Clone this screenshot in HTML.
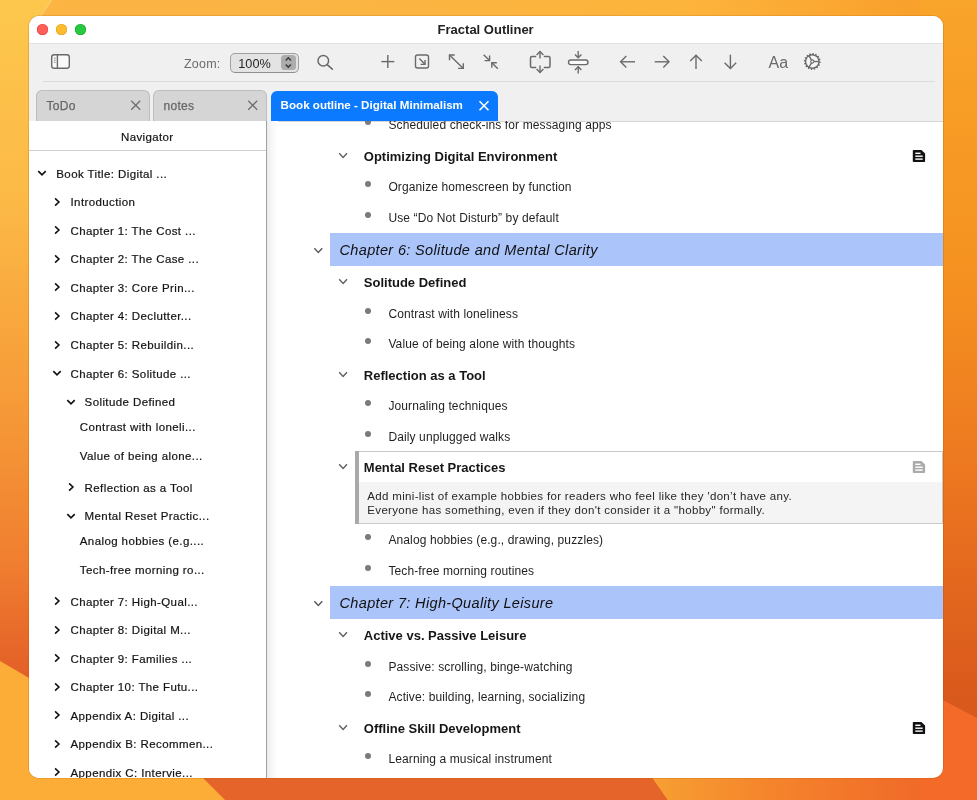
<!DOCTYPE html>
<html><head><meta charset="utf-8"><style>
*{box-sizing:border-box;margin:0;padding:0}
html,body{width:977px;height:800px;overflow:hidden}
body{position:relative;font-family:"Liberation Sans",sans-serif;background:#f9a02c}
#bg{position:absolute;left:0;top:0;width:977px;height:800px}
#win{position:absolute;left:29px;top:16px;width:914px;height:762px;border-radius:10px;overflow:hidden;background:#fff;will-change:transform;box-shadow:0 0 0 0.6px rgba(150,80,0,0.35)}
#inner{position:absolute;left:-29px;top:-16px;width:977px;height:800px}
.t{position:absolute;white-space:nowrap}
.r{position:absolute}
svg.i{position:absolute;overflow:visible}
</style></head><body>
<svg id="bg" width="977" height="800" viewBox="0 0 977 800">
<defs>
<linearGradient id="gtop" x1="0" y1="0" x2="1" y2="0"><stop offset="0" stop-color="#fcb443"/><stop offset="0.3" stop-color="#fbb544"/><stop offset="0.7" stop-color="#fdb43c"/><stop offset="1" stop-color="#f89b28"/></linearGradient>
<linearGradient id="gleft" x1="0" y1="0" x2="0" y2="1"><stop offset="0" stop-color="#fdc74d"/><stop offset="0.25" stop-color="#fcb946"/><stop offset="0.5" stop-color="#f69b38"/><stop offset="0.7" stop-color="#f07f30"/><stop offset="0.85" stop-color="#e35e27"/><stop offset="1" stop-color="#dd5424"/></linearGradient>
<linearGradient id="gright" x1="0" y1="0" x2="0" y2="1"><stop offset="0" stop-color="#f9a42a"/><stop offset="0.35" stop-color="#f59120"/><stop offset="0.6" stop-color="#ec7620"/><stop offset="0.875" stop-color="#d9581c"/></linearGradient>
<linearGradient id="gbr" x1="0" y1="0" x2="1" y2="0"><stop offset="0" stop-color="#f7a232"/><stop offset="0.45" stop-color="#f5852c"/><stop offset="1" stop-color="#f06a28"/></linearGradient>
</defs>
<rect width="977" height="800" fill="url(#gtop)"/>
<rect x="0" y="0" width="60" height="800" fill="url(#gleft)"/><path d="M60,0 H51.5 Q46,9 40,17 L60,17 Z" fill="#fcb443"/><path d="M51.5,0 Q46,9 40,17" fill="none" stroke="#fdd27a" stroke-width="1.2" opacity="0.8"/>
<rect x="920" y="0" width="57" height="800" fill="url(#gright)"/>
<polygon points="0,661 60,696 60,800 0,800" fill="#fcad37"/>
<polygon points="920,688 977,718 977,800 920,800" fill="#f46a28"/>
<polygon points="60,760 185,760 225,800 60,800" fill="#fcad37"/>
<polygon points="185,760 640,760 668,800 225,800" fill="#e5642a"/>
<polygon points="640,760 920,760 920,800 668,800" fill="url(#gbr)"/>
</svg>
<div id="win"><div id="inner"><div class="r" style="left:29px;top:16px;width:914px;height:27px;background:#fff"></div><div class="t" style="left:437.60px;top:22.50px;font-size:13px;line-height:13px;color:#222222;font-weight:bold;font-style:normal;letter-spacing:0px;">Fractal Outliner</div><div class="r" style="left:36.8px;top:24.299999999999997px;width:11.2px;height:11.2px;border-radius:50%;background:#ff5f57;box-shadow:inset 0 0 0 0.6px #e0443e"></div><div class="r" style="left:55.8px;top:24.299999999999997px;width:11.2px;height:11.2px;border-radius:50%;background:#febc2e;box-shadow:inset 0 0 0 0.6px #dea123"></div><div class="r" style="left:74.80000000000001px;top:24.299999999999997px;width:11.2px;height:11.2px;border-radius:50%;background:#28c840;box-shadow:inset 0 0 0 0.6px #1aab29"></div><div class="r" style="left:29px;top:43px;width:914px;height:78px;background:#f0f0f0"></div><div class="r" style="left:29px;top:43px;width:914px;height:1px;background:#e2e2e2"></div><div class="r" style="left:43px;top:81px;width:892px;height:1px;background:#dcdcdc"></div><div class="r" style="left:29px;top:120.5px;width:914px;height:1.2px;background:#d6d6d6"></div><svg class="i" style="left:45px;top:48px" width="30" height="26" viewBox="45 48 30 26"><rect x="51.7" y="54.7" width="17.6" height="13.6" rx="2.6" fill="#fafafa" stroke="#6a6a6a" stroke-width="1.4"/><line x1="57.4" y1="55" x2="57.4" y2="68" stroke="#6a6a6a" stroke-width="1.4"/><g stroke="#8a8a8a" stroke-width="0.9"><line x1="53.8" y1="58.1" x2="55.8" y2="58.1"/><line x1="53.8" y1="60.2" x2="55.8" y2="60.2"/><line x1="53.8" y1="62.3" x2="55.8" y2="62.3"/></g></svg><div class="t" style="left:184.00px;top:57.72px;font-size:12.5px;line-height:12.5px;color:#6b6b6b;font-weight:normal;font-style:normal;letter-spacing:0.2px;">Zoom:</div><div class="r" style="left:230px;top:53px;width:68.5px;height:19.5px;border-radius:5px;background:#e3e3e3;border:1px solid #a0a0a0;border-bottom-color:#8e8e8e"></div><div class="r" style="left:281px;top:55.2px;width:14.5px;height:14.5px;border-radius:3.5px;background:#acacac"></div><svg class="i" style="left:281px;top:55px" width="15" height="15" viewBox="281 55 15 15"><polyline points="285.7,60.4 288.3,57.7 290.9,60.4" fill="none" stroke="#3a3a3a" stroke-width="1.45"/><polyline points="285.7,64.4 288.3,67.1 290.9,64.4" fill="none" stroke="#3a3a3a" stroke-width="1.45"/></svg><div class="t" style="left:238.30px;top:57.55px;font-size:12.7px;line-height:12.7px;color:#262626;font-weight:normal;font-style:normal;letter-spacing:0px;">100%</div><svg class="i" style="left:310px;top:50px" width="28" height="24" viewBox="310 50 28 24"><circle cx="323.3" cy="60.8" r="5.3" fill="none" stroke="#6a6a6a" stroke-width="1.5"/><line x1="327.2" y1="64.7" x2="332.3" y2="69.2" stroke="#6a6a6a" stroke-width="1.6" stroke-linecap="round"/></svg><svg class="i" style="left:376px;top:50px" width="24" height="24" viewBox="376 50 24 24"><line x1="381.3" y1="61.6" x2="394.3" y2="61.6" stroke="#6a6a6a" stroke-width="1.4"/><line x1="387.8" y1="55.1" x2="387.8" y2="68.1" stroke="#6a6a6a" stroke-width="1.4"/></svg><svg class="i" style="left:410px;top:50px" width="24" height="24" viewBox="410 50 24 24"><rect x="415.5" y="55" width="13" height="13" rx="2" fill="none" stroke="#6a6a6a" stroke-width="1.4"/><line x1="419.3" y1="58.6" x2="425" y2="64.3" stroke="#6a6a6a" stroke-width="1.4"/><polyline points="420.6,64.4 425,64.4 425,60" fill="none" stroke="#6a6a6a" stroke-width="1.4"/></svg><svg class="i" style="left:444px;top:50px" width="24" height="24" viewBox="444 50 24 24"><line x1="449.5" y1="55" x2="463.3" y2="68.4" stroke="#6a6a6a" stroke-width="1.4"/><polyline points="449.5,60.2 449.5,55 454.7,55" fill="none" stroke="#6a6a6a" stroke-width="1.4"/><polyline points="458.1,68.4 463.3,68.4 463.3,63.2" fill="none" stroke="#6a6a6a" stroke-width="1.4"/></svg><svg class="i" style="left:479px;top:50px" width="24" height="24" viewBox="479 50 24 24"><line x1="483.6" y1="54.8" x2="489.6" y2="60.6" stroke="#6a6a6a" stroke-width="1.4"/><polyline points="484.6,60.6 489.6,60.6 489.6,55.6" fill="none" stroke="#6a6a6a" stroke-width="1.4"/><line x1="491.8" y1="62.8" x2="497.8" y2="68.8" stroke="#6a6a6a" stroke-width="1.4"/><polyline points="491.8,67.8 491.8,62.8 496.8,62.8" fill="none" stroke="#6a6a6a" stroke-width="1.4"/></svg><svg class="i" style="left:524px;top:46px" width="34" height="32" viewBox="524 46 34 32"><path d="M536.2,56.6 H532 Q530.5,56.6 530.5,58.1 V66 Q530.5,67.5 532,67.5 H536.2 M543.8,56.6 H548.5 Q550,56.6 550,58.1 V66 Q550,67.5 548.5,67.5 H543.8" fill="none" stroke="#6a6a6a" stroke-width="1.5"/><line x1="540" y1="51.5" x2="540" y2="58.5" stroke="#6a6a6a" stroke-width="1.4"/><polyline points="536.6,55 540,51.6 543.4,55" fill="none" stroke="#6a6a6a" stroke-width="1.4"/><line x1="540" y1="65.5" x2="540" y2="72.5" stroke="#6a6a6a" stroke-width="1.4"/><polyline points="536.6,69 540,72.4 543.4,69" fill="none" stroke="#6a6a6a" stroke-width="1.4"/></svg><svg class="i" style="left:562px;top:46px" width="34" height="32" viewBox="562 46 34 32"><rect x="568.5" y="60" width="19.5" height="4.6" rx="2.3" fill="#fafafa" stroke="#6a6a6a" stroke-width="1.4"/><line x1="578.2" y1="51" x2="578.2" y2="57.8" stroke="#6a6a6a" stroke-width="1.4"/><polyline points="575,54.6 578.2,57.8 581.4,54.6" fill="none" stroke="#6a6a6a" stroke-width="1.4"/><line x1="578.2" y1="66.8" x2="578.2" y2="73.6" stroke="#6a6a6a" stroke-width="1.4"/><polyline points="575,70 578.2,66.8 581.4,70" fill="none" stroke="#6a6a6a" stroke-width="1.4"/></svg><svg class="i" style="left:615px;top:50px" width="24" height="24" viewBox="615 50 24 24"><line x1="620.6" y1="61.8" x2="635" y2="61.8" stroke="#6a6a6a" stroke-width="1.4"/><polyline points="626.3,56 620.6,61.8 626.3,67.5" fill="none" stroke="#6a6a6a" stroke-width="1.4"/></svg><svg class="i" style="left:650px;top:50px" width="24" height="24" viewBox="650 50 24 24"><line x1="654.7" y1="61.8" x2="669" y2="61.8" stroke="#6a6a6a" stroke-width="1.4"/><polyline points="663.3,56 669,61.8 663.3,67.5" fill="none" stroke="#6a6a6a" stroke-width="1.4"/></svg><svg class="i" style="left:684px;top:50px" width="24" height="24" viewBox="684 50 24 24"><line x1="696" y1="55.3" x2="696" y2="69" stroke="#6a6a6a" stroke-width="1.4"/><polyline points="690.2,61 696,55.3 701.8,61" fill="none" stroke="#6a6a6a" stroke-width="1.4"/></svg><svg class="i" style="left:718px;top:50px" width="24" height="24" viewBox="718 50 24 24"><line x1="730.4" y1="54.7" x2="730.4" y2="68.5" stroke="#6a6a6a" stroke-width="1.4"/><polyline points="724.6,62.8 730.4,68.5 736.2,62.8" fill="none" stroke="#6a6a6a" stroke-width="1.4"/></svg><div class="t" style="left:768.50px;top:55.06px;font-size:16px;line-height:16px;color:#6a6a6a;font-weight:normal;font-style:normal;letter-spacing:0px;">Aa</div><svg class="i" style="left:800px;top:49px" width="25" height="25" viewBox="800 49 25 25"><polygon points="820.79,61.92 820.71,62.75 819.38,63.27 819.17,63.96 819.98,65.13 819.59,65.87 818.16,65.85 817.71,66.40 818.01,67.80 817.36,68.33 816.05,67.76 815.42,68.10 815.16,69.50 814.37,69.75 813.37,68.72 812.66,68.79 811.88,69.99 811.05,69.91 810.53,68.58 809.84,68.37 808.67,69.18 807.93,68.79 807.95,67.36 807.40,66.91 806.00,67.21 805.47,66.56 806.04,65.25 805.70,64.62 804.30,64.36 804.05,63.57 805.08,62.57 805.01,61.86 803.81,61.08 803.89,60.25 805.22,59.73 805.43,59.04 804.62,57.87 805.01,57.13 806.44,57.15 806.89,56.60 806.59,55.20 807.24,54.67 808.55,55.24 809.18,54.90 809.44,53.50 810.23,53.25 811.23,54.28 811.94,54.21 812.72,53.01 813.55,53.09 814.07,54.42 814.76,54.63 815.93,53.82 816.67,54.21 816.65,55.64 817.20,56.09 818.60,55.79 819.13,56.44 818.56,57.75 818.90,58.38 820.30,58.64 820.55,59.43 819.52,60.43 819.59,61.14" fill="#6a6a6a"/><circle cx="812.3" cy="61.5" r="6.0" fill="#f5f5f5"/><line x1="813.80" y1="61.50" x2="818.50" y2="61.50" stroke="#6a6a6a" stroke-width="1.35"/><line x1="811.55" y1="62.80" x2="809.20" y2="66.87" stroke="#6a6a6a" stroke-width="1.35"/><line x1="811.55" y1="60.20" x2="809.20" y2="56.13" stroke="#6a6a6a" stroke-width="1.35"/><circle cx="812.3" cy="61.5" r="1.6" fill="#f5f5f5" stroke="#6a6a6a" stroke-width="1.1"/></svg><div class="r" style="left:35.5px;top:89.5px;width:114.5px;height:32px;border-radius:6px 6px 0 0;background:#d5d5d5;border:1px solid #bdbdbd;border-bottom:none"></div><div class="t" style="left:46.50px;top:99.64px;font-size:12px;line-height:12px;color:#666666;font-weight:normal;font-style:normal;letter-spacing:0.3px;-webkit-text-stroke:0.25px #666;">ToDo</div><svg class="i" style="left:128px;top:97px" width="16" height="16" viewBox="128 97 16 16"><line x1="131.2" y1="100.8" x2="140.2" y2="109.8" stroke="#6e6e6e" stroke-width="1.3"/><line x1="131.2" y1="109.8" x2="140.2" y2="100.8" stroke="#6e6e6e" stroke-width="1.3"/></svg><div class="r" style="left:152.5px;top:89.5px;width:114.0px;height:32px;border-radius:6px 6px 0 0;background:#d5d5d5;border:1px solid #bdbdbd;border-bottom:none"></div><div class="t" style="left:163.50px;top:99.64px;font-size:12px;line-height:12px;color:#666666;font-weight:normal;font-style:normal;letter-spacing:0.3px;-webkit-text-stroke:0.25px #666;">notes</div><svg class="i" style="left:244.5px;top:97px" width="16" height="16" viewBox="244.5 97 16 16"><line x1="247.7" y1="100.8" x2="256.7" y2="109.8" stroke="#6e6e6e" stroke-width="1.3"/><line x1="247.7" y1="109.8" x2="256.7" y2="100.8" stroke="#6e6e6e" stroke-width="1.3"/></svg><div class="r" style="left:271px;top:90.8px;width:226.5px;height:30.2px;border-radius:6px 6px 0 0;background:#0b7afe"></div><div class="t" style="left:280.60px;top:99.48px;font-size:11.6px;line-height:11.6px;color:#ffffff;font-weight:bold;font-style:normal;letter-spacing:0px;">Book outline - Digital Minimalism</div><svg class="i" style="left:476px;top:97px" width="16" height="16" viewBox="476 97 16 16"><line x1="479.5" y1="101.2" x2="488.5" y2="110.2" stroke="#ffffff" stroke-width="1.6"/><line x1="479.5" y1="110.2" x2="488.5" y2="101.2" stroke="#ffffff" stroke-width="1.6"/></svg><div class="r" style="left:29px;top:121px;width:237px;height:657px;background:#fff"></div><div class="r" style="left:29px;top:150px;width:237px;height:1px;background:#cfcfcf"></div><div class="r" style="left:266px;top:121px;width:1px;height:657px;background:#a2a2a2"></div><div class="r" style="left:267px;top:121px;width:11px;height:657px;background:linear-gradient(to right,#ececec,#f6f6f6 40%,#ffffff)"></div><div class="t" style="left:121.00px;top:131.97px;font-size:11.5px;line-height:11.5px;color:#141414;font-weight:normal;font-style:normal;letter-spacing:0.35px;-webkit-text-stroke:0.2px #141414;">Navigator</div><div class="t" style="left:56.30px;top:168.67px;font-size:11.5px;line-height:11.5px;color:#141414;font-weight:normal;font-style:normal;letter-spacing:0.4px;-webkit-text-stroke:0.2px #141414;">Book Title: Digital ...</div><svg class="i" style="left:34.3px;top:165.10000000000002px" width="16" height="16" viewBox="34.3 165.10000000000002 16 16"><polyline points="38.60,171.20 42.30,175.00 46.00,171.20" fill="none" stroke="#111" stroke-width="1.6"/></svg><div class="t" style="left:70.50px;top:197.17px;font-size:11.5px;line-height:11.5px;color:#141414;font-weight:normal;font-style:normal;letter-spacing:0.4px;-webkit-text-stroke:0.2px #141414;">Introduction</div><svg class="i" style="left:48.8px;top:193.60000000000002px" width="16" height="16" viewBox="48.8 193.60000000000002 16 16"><polyline points="54.90,198.00 58.70,201.60 54.90,205.20" fill="none" stroke="#111" stroke-width="1.6"/></svg><div class="t" style="left:70.50px;top:225.77px;font-size:11.5px;line-height:11.5px;color:#141414;font-weight:normal;font-style:normal;letter-spacing:0.4px;-webkit-text-stroke:0.2px #141414;">Chapter 1: The Cost ...</div><svg class="i" style="left:48.8px;top:222.20000000000002px" width="16" height="16" viewBox="48.8 222.20000000000002 16 16"><polyline points="54.90,226.60 58.70,230.20 54.90,233.80" fill="none" stroke="#111" stroke-width="1.6"/></svg><div class="t" style="left:70.50px;top:254.37px;font-size:11.5px;line-height:11.5px;color:#141414;font-weight:normal;font-style:normal;letter-spacing:0.4px;-webkit-text-stroke:0.2px #141414;">Chapter 2: The Case ...</div><svg class="i" style="left:48.8px;top:250.8px" width="16" height="16" viewBox="48.8 250.8 16 16"><polyline points="54.90,255.20 58.70,258.80 54.90,262.40" fill="none" stroke="#111" stroke-width="1.6"/></svg><div class="t" style="left:70.50px;top:282.97px;font-size:11.5px;line-height:11.5px;color:#141414;font-weight:normal;font-style:normal;letter-spacing:0.4px;-webkit-text-stroke:0.2px #141414;">Chapter 3: Core Prin...</div><svg class="i" style="left:48.8px;top:279.40000000000003px" width="16" height="16" viewBox="48.8 279.40000000000003 16 16"><polyline points="54.90,283.80 58.70,287.40 54.90,291.00" fill="none" stroke="#111" stroke-width="1.6"/></svg><div class="t" style="left:70.50px;top:311.47px;font-size:11.5px;line-height:11.5px;color:#141414;font-weight:normal;font-style:normal;letter-spacing:0.4px;-webkit-text-stroke:0.2px #141414;">Chapter 4: Declutter...</div><svg class="i" style="left:48.8px;top:307.90000000000003px" width="16" height="16" viewBox="48.8 307.90000000000003 16 16"><polyline points="54.90,312.30 58.70,315.90 54.90,319.50" fill="none" stroke="#111" stroke-width="1.6"/></svg><div class="t" style="left:70.50px;top:340.07px;font-size:11.5px;line-height:11.5px;color:#141414;font-weight:normal;font-style:normal;letter-spacing:0.4px;-webkit-text-stroke:0.2px #141414;">Chapter 5: Rebuildin...</div><svg class="i" style="left:48.8px;top:336.5px" width="16" height="16" viewBox="48.8 336.5 16 16"><polyline points="54.90,340.90 58.70,344.50 54.90,348.10" fill="none" stroke="#111" stroke-width="1.6"/></svg><div class="t" style="left:70.50px;top:368.67px;font-size:11.5px;line-height:11.5px;color:#141414;font-weight:normal;font-style:normal;letter-spacing:0.4px;-webkit-text-stroke:0.2px #141414;">Chapter 6: Solitude ...</div><svg class="i" style="left:48.5px;top:365.1px" width="16" height="16" viewBox="48.5 365.1 16 16"><polyline points="52.80,371.20 56.50,375.00 60.20,371.20" fill="none" stroke="#111" stroke-width="1.6"/></svg><div class="t" style="left:84.60px;top:397.27px;font-size:11.5px;line-height:11.5px;color:#141414;font-weight:normal;font-style:normal;letter-spacing:0.4px;-webkit-text-stroke:0.2px #141414;">Solitude Defined</div><svg class="i" style="left:63.0px;top:393.7px" width="16" height="16" viewBox="63.0 393.7 16 16"><polyline points="67.30,399.80 71.00,403.60 74.70,399.80" fill="none" stroke="#111" stroke-width="1.6"/></svg><div class="t" style="left:79.80px;top:422.17px;font-size:11.5px;line-height:11.5px;color:#141414;font-weight:normal;font-style:normal;letter-spacing:0.4px;-webkit-text-stroke:0.2px #141414;">Contrast with loneli...</div><div class="t" style="left:79.80px;top:450.77px;font-size:11.5px;line-height:11.5px;color:#141414;font-weight:normal;font-style:normal;letter-spacing:0.4px;-webkit-text-stroke:0.2px #141414;">Value of being alone...</div><div class="t" style="left:84.60px;top:482.87px;font-size:11.5px;line-height:11.5px;color:#141414;font-weight:normal;font-style:normal;letter-spacing:0.4px;-webkit-text-stroke:0.2px #141414;">Reflection as a Tool</div><svg class="i" style="left:62.900000000000006px;top:479.3px" width="16" height="16" viewBox="62.900000000000006 479.3 16 16"><polyline points="69.00,483.70 72.80,487.30 69.00,490.90" fill="none" stroke="#111" stroke-width="1.6"/></svg><div class="t" style="left:84.60px;top:511.27px;font-size:11.5px;line-height:11.5px;color:#141414;font-weight:normal;font-style:normal;letter-spacing:0.4px;-webkit-text-stroke:0.2px #141414;">Mental Reset Practic...</div><svg class="i" style="left:62.900000000000006px;top:507.69999999999993px" width="16" height="16" viewBox="62.900000000000006 507.69999999999993 16 16"><polyline points="67.20,513.80 70.90,517.60 74.60,513.80" fill="none" stroke="#111" stroke-width="1.6"/></svg><div class="t" style="left:79.80px;top:536.07px;font-size:11.5px;line-height:11.5px;color:#141414;font-weight:normal;font-style:normal;letter-spacing:0.4px;-webkit-text-stroke:0.2px #141414;">Analog hobbies (e.g....</div><div class="t" style="left:79.80px;top:564.67px;font-size:11.5px;line-height:11.5px;color:#141414;font-weight:normal;font-style:normal;letter-spacing:0.4px;-webkit-text-stroke:0.2px #141414;">Tech-free morning ro...</div><div class="t" style="left:70.50px;top:596.77px;font-size:11.5px;line-height:11.5px;color:#141414;font-weight:normal;font-style:normal;letter-spacing:0.4px;-webkit-text-stroke:0.2px #141414;">Chapter 7: High-Qual...</div><svg class="i" style="left:48.8px;top:593.1999999999999px" width="16" height="16" viewBox="48.8 593.1999999999999 16 16"><polyline points="54.90,597.60 58.70,601.20 54.90,604.80" fill="none" stroke="#111" stroke-width="1.6"/></svg><div class="t" style="left:70.50px;top:625.27px;font-size:11.5px;line-height:11.5px;color:#141414;font-weight:normal;font-style:normal;letter-spacing:0.4px;-webkit-text-stroke:0.2px #141414;">Chapter 8: Digital M...</div><svg class="i" style="left:48.8px;top:621.6999999999999px" width="16" height="16" viewBox="48.8 621.6999999999999 16 16"><polyline points="54.90,626.10 58.70,629.70 54.90,633.30" fill="none" stroke="#111" stroke-width="1.6"/></svg><div class="t" style="left:70.50px;top:653.77px;font-size:11.5px;line-height:11.5px;color:#141414;font-weight:normal;font-style:normal;letter-spacing:0.4px;-webkit-text-stroke:0.2px #141414;">Chapter 9: Families ...</div><svg class="i" style="left:48.8px;top:650.1999999999999px" width="16" height="16" viewBox="48.8 650.1999999999999 16 16"><polyline points="54.90,654.60 58.70,658.20 54.90,661.80" fill="none" stroke="#111" stroke-width="1.6"/></svg><div class="t" style="left:70.50px;top:682.37px;font-size:11.5px;line-height:11.5px;color:#141414;font-weight:normal;font-style:normal;letter-spacing:0.4px;-webkit-text-stroke:0.2px #141414;">Chapter 10: The Futu...</div><svg class="i" style="left:48.8px;top:678.8px" width="16" height="16" viewBox="48.8 678.8 16 16"><polyline points="54.90,683.20 58.70,686.80 54.90,690.40" fill="none" stroke="#111" stroke-width="1.6"/></svg><div class="t" style="left:70.50px;top:710.87px;font-size:11.5px;line-height:11.5px;color:#141414;font-weight:normal;font-style:normal;letter-spacing:0.4px;-webkit-text-stroke:0.2px #141414;">Appendix A: Digital ...</div><svg class="i" style="left:48.8px;top:707.3px" width="16" height="16" viewBox="48.8 707.3 16 16"><polyline points="54.90,711.70 58.70,715.30 54.90,718.90" fill="none" stroke="#111" stroke-width="1.6"/></svg><div class="t" style="left:70.50px;top:739.47px;font-size:11.5px;line-height:11.5px;color:#141414;font-weight:normal;font-style:normal;letter-spacing:0.4px;-webkit-text-stroke:0.2px #141414;">Appendix B: Recommen...</div><svg class="i" style="left:48.8px;top:735.9px" width="16" height="16" viewBox="48.8 735.9 16 16"><polyline points="54.90,740.30 58.70,743.90 54.90,747.50" fill="none" stroke="#111" stroke-width="1.6"/></svg><div class="t" style="left:70.50px;top:767.97px;font-size:11.5px;line-height:11.5px;color:#141414;font-weight:normal;font-style:normal;letter-spacing:0.4px;-webkit-text-stroke:0.2px #141414;">Appendix C: Intervie...</div><svg class="i" style="left:48.8px;top:764.4px" width="16" height="16" viewBox="48.8 764.4 16 16"><polyline points="54.90,768.80 58.70,772.40 54.90,776.00" fill="none" stroke="#111" stroke-width="1.6"/></svg><div class="r" style="left:267px;top:121px;width:676px;height:657px;overflow:hidden"><div class="r" style="left:-267px;top:-121px;width:977px;height:800px"><div class="r" style="left:364.90px;top:119.30px;width:6px;height:6px;border-radius:50%;background:#7a7a7a"></div><div class="t" style="left:388.40px;top:119.00px;font-size:12px;line-height:12px;color:#1f1f1f;font-weight:normal;font-style:normal;letter-spacing:0.12px;">Scheduled check-ins for messaging apps</div><svg class="i" style="left:333px;top:147.0px" width="20" height="16" viewBox="333 147.0 20 16"><polyline points="339.20,153.20 343.10,157.40 347.00,153.20" fill="none" stroke="#606060" stroke-width="1.4"/></svg><div class="t" style="left:363.80px;top:150.00px;font-size:13px;line-height:13px;color:#161616;font-weight:bold;font-style:normal;letter-spacing:0px;">Optimizing Digital Environment</div><svg class="i" style="left:908px;top:145.9px" width="22" height="20" viewBox="908 145.9 22 20"><path d="M913.5999999999999,149.9 H921.4 L925.0999999999999,153.5 V161.1 Q925.0999999999999,161.9 924.3,161.9 H913.5999999999999 Q912.8,161.9 912.8,161.1 V150.70000000000002 Q912.8,149.9 913.5999999999999,149.9 Z" fill="#111"/><g stroke="#fff" stroke-width="1.4"><line x1="915.3" y1="153.20000000000002" x2="920.5" y2="153.20000000000002"/><line x1="915.3" y1="156.1" x2="922.6999999999999" y2="156.1"/><line x1="915.3" y1="159.0" x2="922.6999999999999" y2="159.0"/></g></svg><div class="r" style="left:364.90px;top:181.30px;width:6px;height:6px;border-radius:50%;background:#7a7a7a"></div><div class="t" style="left:388.40px;top:181.00px;font-size:12px;line-height:12px;color:#1f1f1f;font-weight:normal;font-style:normal;letter-spacing:0.12px;">Organize homescreen by function</div><div class="r" style="left:364.90px;top:212.30px;width:6px;height:6px;border-radius:50%;background:#7a7a7a"></div><div class="t" style="left:388.40px;top:212.00px;font-size:12px;line-height:12px;color:#1f1f1f;font-weight:normal;font-style:normal;letter-spacing:0.12px;">Use “Do Not Disturb” by default</div><div class="r" style="left:330px;top:232.6px;width:613px;height:33.29999999999998px;background:#abc4fa"></div><svg class="i" style="left:308px;top:242.05px" width="20" height="16" viewBox="308 242.05 20 16"><polyline points="314.35,248.35 318.30,252.55 322.25,248.35" fill="none" stroke="#585858" stroke-width="1.4"/></svg><div class="t" style="left:339.50px;top:242.63px;font-size:14.5px;line-height:14.5px;color:#111;font-weight:normal;font-style:italic;letter-spacing:0.35px;">Chapter 6: Solitude and Mental Clarity</div><svg class="i" style="left:333px;top:273.0px" width="20" height="16" viewBox="333 273.0 20 16"><polyline points="339.20,279.20 343.10,283.40 347.00,279.20" fill="none" stroke="#606060" stroke-width="1.4"/></svg><div class="t" style="left:363.80px;top:276.00px;font-size:13px;line-height:13px;color:#161616;font-weight:bold;font-style:normal;letter-spacing:0px;">Solitude Defined</div><div class="r" style="left:364.90px;top:308.30px;width:6px;height:6px;border-radius:50%;background:#7a7a7a"></div><div class="t" style="left:388.40px;top:308.00px;font-size:12px;line-height:12px;color:#1f1f1f;font-weight:normal;font-style:normal;letter-spacing:0.12px;">Contrast with loneliness</div><div class="r" style="left:364.90px;top:338.30px;width:6px;height:6px;border-radius:50%;background:#7a7a7a"></div><div class="t" style="left:388.40px;top:338.00px;font-size:12px;line-height:12px;color:#1f1f1f;font-weight:normal;font-style:normal;letter-spacing:0.12px;">Value of being alone with thoughts</div><svg class="i" style="left:333px;top:366.0px" width="20" height="16" viewBox="333 366.0 20 16"><polyline points="339.20,372.20 343.10,376.40 347.00,372.20" fill="none" stroke="#606060" stroke-width="1.4"/></svg><div class="t" style="left:363.80px;top:369.00px;font-size:13px;line-height:13px;color:#161616;font-weight:bold;font-style:normal;letter-spacing:0px;">Reflection as a Tool</div><div class="r" style="left:364.90px;top:400.30px;width:6px;height:6px;border-radius:50%;background:#7a7a7a"></div><div class="t" style="left:388.40px;top:400.00px;font-size:12px;line-height:12px;color:#1f1f1f;font-weight:normal;font-style:normal;letter-spacing:0.12px;">Journaling techniques</div><div class="r" style="left:364.90px;top:431.30px;width:6px;height:6px;border-radius:50%;background:#7a7a7a"></div><div class="t" style="left:388.40px;top:431.00px;font-size:12px;line-height:12px;color:#1f1f1f;font-weight:normal;font-style:normal;letter-spacing:0.12px;">Daily unplugged walks</div><div class="r" style="left:354.5px;top:451px;width:588.5px;height:73px;background:#fff;border:1px solid #c9c9c9;border-left:none"></div><div class="r" style="left:359px;top:481.5px;width:583px;height:41.5px;background:#f4f4f4"></div><div class="r" style="left:354.5px;top:451px;width:4.4px;height:73px;background:#a9a9a9"></div><svg class="i" style="left:333px;top:458.0px" width="20" height="16" viewBox="333 458.0 20 16"><polyline points="339.20,464.20 343.10,468.40 347.00,464.20" fill="none" stroke="#606060" stroke-width="1.4"/></svg><div class="t" style="left:363.80px;top:461.00px;font-size:13px;line-height:13px;color:#161616;font-weight:bold;font-style:normal;letter-spacing:0px;">Mental Reset Practices</div><svg class="i" style="left:908px;top:457.0px" width="22" height="20" viewBox="908 457.0 22 20"><path d="M913.5999999999999,461.0 H921.4 L925.0999999999999,464.6 V472.2 Q925.0999999999999,473.0 924.3,473.0 H913.5999999999999 Q912.8,473.0 912.8,472.2 V461.8 Q912.8,461.0 913.5999999999999,461.0 Z" fill="#ababab"/><g stroke="#fff" stroke-width="1.4"><line x1="915.3" y1="464.3" x2="920.5" y2="464.3"/><line x1="915.3" y1="467.2" x2="922.6999999999999" y2="467.2"/><line x1="915.3" y1="470.1" x2="922.6999999999999" y2="470.1"/></g></svg><div class="t" style="left:367.30px;top:491.00px;font-size:11.5px;line-height:11.5px;color:#262626;font-weight:normal;font-style:normal;letter-spacing:0.33px;">Add mini-list of example hobbies for readers who feel like they 'don’t have any.</div><div class="t" style="left:367.30px;top:505.00px;font-size:11.5px;line-height:11.5px;color:#262626;font-weight:normal;font-style:normal;letter-spacing:0.33px;">Everyone has something, even if they don't consider it a "hobby" formally.</div><div class="r" style="left:364.90px;top:534.30px;width:6px;height:6px;border-radius:50%;background:#7a7a7a"></div><div class="t" style="left:388.40px;top:534.00px;font-size:12px;line-height:12px;color:#1f1f1f;font-weight:normal;font-style:normal;letter-spacing:0.12px;">Analog hobbies (e.g., drawing, puzzles)</div><div class="r" style="left:364.90px;top:565.30px;width:6px;height:6px;border-radius:50%;background:#7a7a7a"></div><div class="t" style="left:388.40px;top:565.00px;font-size:12px;line-height:12px;color:#1f1f1f;font-weight:normal;font-style:normal;letter-spacing:0.12px;">Tech-free morning routines</div><div class="r" style="left:330px;top:585.5px;width:613px;height:33.700000000000045px;background:#abc4fa"></div><svg class="i" style="left:308px;top:595.15px" width="20" height="16" viewBox="308 595.15 20 16"><polyline points="314.35,601.45 318.30,605.65 322.25,601.45" fill="none" stroke="#585858" stroke-width="1.4"/></svg><div class="t" style="left:339.50px;top:596.13px;font-size:14.5px;line-height:14.5px;color:#111;font-weight:normal;font-style:italic;letter-spacing:0.35px;">Chapter 7: High-Quality Leisure</div><svg class="i" style="left:333px;top:626.0px" width="20" height="16" viewBox="333 626.0 20 16"><polyline points="339.20,632.20 343.10,636.40 347.00,632.20" fill="none" stroke="#606060" stroke-width="1.4"/></svg><div class="t" style="left:363.80px;top:629.00px;font-size:13px;line-height:13px;color:#161616;font-weight:bold;font-style:normal;letter-spacing:0px;">Active vs. Passive Leisure</div><div class="r" style="left:364.90px;top:661.30px;width:6px;height:6px;border-radius:50%;background:#7a7a7a"></div><div class="t" style="left:388.40px;top:661.00px;font-size:12px;line-height:12px;color:#1f1f1f;font-weight:normal;font-style:normal;letter-spacing:0.12px;">Passive: scrolling, binge-watching</div><div class="r" style="left:364.90px;top:691.30px;width:6px;height:6px;border-radius:50%;background:#7a7a7a"></div><div class="t" style="left:388.40px;top:691.00px;font-size:12px;line-height:12px;color:#1f1f1f;font-weight:normal;font-style:normal;letter-spacing:0.12px;">Active: building, learning, socializing</div><svg class="i" style="left:333px;top:719.0px" width="20" height="16" viewBox="333 719.0 20 16"><polyline points="339.20,725.20 343.10,729.40 347.00,725.20" fill="none" stroke="#606060" stroke-width="1.4"/></svg><div class="t" style="left:363.80px;top:722.00px;font-size:13px;line-height:13px;color:#161616;font-weight:bold;font-style:normal;letter-spacing:0px;">Offline Skill Development</div><svg class="i" style="left:908px;top:718.2px" width="22" height="20" viewBox="908 718.2 22 20"><path d="M913.5999999999999,722.2 H921.4 L925.0999999999999,725.8000000000001 V733.4000000000001 Q925.0999999999999,734.2 924.3,734.2 H913.5999999999999 Q912.8,734.2 912.8,733.4000000000001 V723.0 Q912.8,722.2 913.5999999999999,722.2 Z" fill="#111"/><g stroke="#fff" stroke-width="1.4"><line x1="915.3" y1="725.5" x2="920.5" y2="725.5"/><line x1="915.3" y1="728.4000000000001" x2="922.6999999999999" y2="728.4000000000001"/><line x1="915.3" y1="731.3000000000001" x2="922.6999999999999" y2="731.3000000000001"/></g></svg><div class="r" style="left:364.90px;top:753.30px;width:6px;height:6px;border-radius:50%;background:#7a7a7a"></div><div class="t" style="left:388.40px;top:753.00px;font-size:12px;line-height:12px;color:#1f1f1f;font-weight:normal;font-style:normal;letter-spacing:0.12px;">Learning a musical instrument</div></div></div></div></div>
</body></html>
